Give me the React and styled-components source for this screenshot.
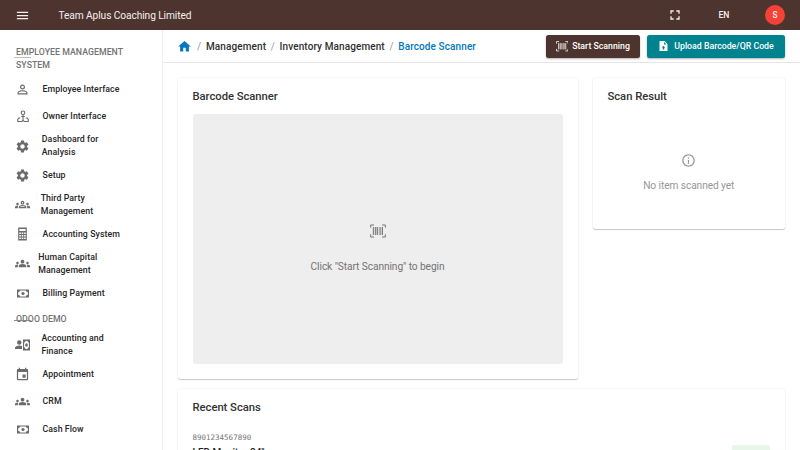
import React from 'react';
import styled, { createGlobalStyle } from 'styled-components';
import {
  MdMenu, MdFullscreen, MdHome, MdSettings, MdGroups, MdOutlineGroups,
  MdInfoOutline, MdEvent, MdPersonOutline,
} from 'react-icons/md';

const GlobalStyle = createGlobalStyle`
  * { box-sizing: border-box; }
  body { margin: 0; overflow: hidden; background: #fff; font-family: Roboto, sans-serif; color: #333; }
  svg { display: block; flex: none; }
`;

const Page = styled.div`
  height: 450px;
  display: flex;
  flex-direction: column;
  overflow: hidden;
`;

const TopBar = styled.header`
  height: 30px;
  flex: none;
  display: flex;
  align-items: center;
  padding: 0 15px;
  background: #4e342e;
  color: #f5efee;
`;

const AppTitle = styled.div`
  margin-left: 28.5px;
  flex: 1;
  font-size: 10.2px;
  letter-spacing: -0.09px;
`;

const Language = styled.div`
  width: 20px;
  margin: 0 31px 0 31px;
  text-align: center;
  font-size: 8.6px;
  font-weight: 500;
`;

const Avatar = styled.div`
  width: 20px;
  height: 20px;
  border-radius: 50%;
  background: #f44336;
  display: grid;
  place-items: center;
  font-size: 8.2px;
  font-weight: 500;
`;

const Body = styled.div`
  flex: 1;
  min-height: 0;
  display: flex;
`;

const Sidebar = styled.nav`
  width: 162.5px;
  flex: none;
  padding-top: 10px;
  border-right: 1px solid #eeeeee;
`;

const SectionHeading = styled.div`
  position: relative;
  padding: ${(p) => p.$top}px 20px ${(p) => 9.7 - p.$top}px 16px;
  font-size: 8.75px;
  line-height: 13px;
  font-weight: 500;
  letter-spacing: 0.04px;
  color: #737373;
  &::before {
    content: '';
    position: absolute;
    left: 14px;
    top: ${(p) => p.$rule}px;
    width: 17px;
    height: 1px;
    background: ${(p) => p.$tone};
  }
`;

const NavItem = styled.div`
  height: ${(p) => (p.$tall ? 31.2 : 27.5)}px;
  display: flex;
  align-items: center;
  color: #6b6b6b;
`;

const NavIcon = styled.span`
  width: 15px;
  margin-left: 15px;
  display: grid;
  place-items: center;
`;

const NavLabel = styled.span`
  margin-left: ${(p) => p.$gap}px;
  font-size: 8.75px;
  line-height: 13px;
  font-weight: 500;
  letter-spacing: 0.08px;
  white-space: pre-line;
  color: #262626;
`;

const Main = styled.main`
  flex: 1;
  min-width: 0;
`;

const SubHeader = styled.div`
  height: 33px;
  display: flex;
  align-items: center;
  padding: 0 15px 0 14.5px;
  border-bottom: 1px solid #e6e6e6;
`;

const Crumbs = styled.div`
  flex: 1;
  display: flex;
  align-items: center;
  font-size: 10px;
  font-weight: 500;
  letter-spacing: 0.1px;
  color: #303030;
`;

const Slash = styled.span`
  width: ${(p) => p.$width}px;
  text-align: center;
  font-weight: 400;
  color: #999;
`;

const Current = styled.span`
  color: #0277bd;
`;

const ActionButton = styled.button`
  height: 23px;
  width: ${(p) => p.$width}px;
  margin: 0 0 0 7px;
  padding: 0;
  border: 0;
  border-radius: 2.5px;
  display: flex;
  align-items: center;
  justify-content: center;
  gap: ${(p) => p.$gap}px;
  background: ${(p) => p.$color};
  color: #fff;
  font: 500 8.75px Roboto, sans-serif;
  box-shadow: 0 1px 2px rgba(0, 0, 0, 0.3);
`;

const Content = styled.div`
  padding: 15px 15px 0;
  display: grid;
  grid-template-columns: 400px 192.5px;
  column-gap: 15px;
  row-gap: 10px;
  align-items: start;
`;

const Card = styled.section`
  height: ${(p) => p.$height}px;
  padding: 10px 15px;
  border-radius: 2.5px;
  background: #fff;
  grid-column: ${(p) => (p.$wide ? '1 / -1' : 'auto')};
  box-shadow: 0 1px 1px rgba(0, 0, 0, 0.2), 0 0 2px rgba(0, 0, 0, 0.1);
`;

const CardTitle = styled.h2`
  margin: 0;
  font-size: 11.25px;
  line-height: 18px;
  font-weight: 500;
  letter-spacing: -0.03px;
  color: #333;
`;

const Viewfinder = styled.div`
  margin-top: 8px;
  height: 250px;
  border-radius: 2.5px;
  background: #eeeeee;
  display: flex;
  flex-direction: column;
  align-items: center;
  padding-top: 109px;
  color: #737373;
`;

const Hint = styled.div`
  margin-top: ${(p) => p.$gap}px;
  font-size: 10.2px;
  line-height: 15px;
  letter-spacing: -0.09px;
`;

const EmptyResult = styled.div`
  padding-top: 47px;
  display: flex;
  flex-direction: column;
  align-items: center;
  color: #969696;
`;

const ScanRow = styled.div`
  margin-top: 15px;
  display: flex;
  justify-content: space-between;
`;

const Code = styled.div`
  font: 7.5px/11px 'DejaVu Sans Mono', monospace;
  color: #777;
`;

const ItemName = styled.div`
  margin-top: 2px;
  font-size: 10px;
  line-height: 15px;
  font-weight: 500;
  color: #222;
`;

const Status = styled.div`
  width: 38px;
  height: 18px;
  margin: 13px 0 0;
  border-radius: 2.5px;
  background: #e8f5e9;
`;

const ScanIcon = ({ size = 15 }) => (
  <svg width={size} height={size} viewBox="0 0 24 24" fill="none" stroke="currentColor" strokeWidth="1.5">
    <path d="M1 7V3h5M18 3h5v4M23 17v4h-5M6 21H1v-4" />
    <path d="M5 6v12M8 6v12M11.5 6v12M15 6v12M18.7 6v12" />
    <path d="M9.5 6v12M16.5 6v12" strokeWidth=".7" />
  </svg>
);

const OwnerIcon = () => (
  <svg width="12" height="13" viewBox="0 0 24 26" fill="none" stroke="currentColor" strokeWidth="2.2">
    <circle cx="12" cy="5.5" r="3.6" />
    <path d="M12 9.5V22M8.5 13h7M6.500 16H3.500l-2 3v4h8l2.500-2.500 2.500 2.500h8v-4l-2-3h-3" />
  </svg>
);

const CalculatorIcon = () => (
  <svg width="13" height="14" viewBox="0 0 24 26">
    <path
      fill="currentColor"
      fillRule="evenodd"
      d="M4 1h16v24H4zM6.3 3.5v4h11.4v-4zM6 10v3h3v-3zM10.5 10v3h3v-3zM15 10v3h3v-3zM6 14.7v3h3v-3zM10.5 14.7v3h3v-3zM15 14.7v3h3v-3zM6 19.5v3h3v-3zM10.5 19.5v3h3v-3zM15 19.5v3h3v-3z"
    />
  </svg>
);

const CashIcon = () => (
  <svg width="12" height="9" viewBox="0 0 24 18">
    <path fill="currentColor" fillRule="evenodd" d="M0 1h24v16H0zM6 3c0 1.700-1 3-3.500 3v6c2.500 0 3.500 1.300 3.500 3h12c0-1.700 1-3 3.500-3V6C19 6 18 4.700 18 3z" />
    <circle cx="12" cy="9" r="3.2" fill="currentColor" />
  </svg>
);

const FinanceIcon = () => (
  <svg width="15" height="12" viewBox="0 0 30 24" fill="currentColor">
    <circle cx="8.5" cy="7" r="4.5" />
    <path d="M0 20v-2c0-3 4-5 8.5-5 2 0 4 .4 5.5 1.2V20z" />
    <path fillRule="evenodd" d="M16 1h14v22H16zM18.2 7v10c1.6 0 2.6 1 2.6 2.8h4.4c0-1.8 1-2.8 2.6-2.8V7c-1.6 0-2.6-1-2.6-2.8h-4.4C20.8 6 19.8 7 18.2 7z" />
    <ellipse cx="23" cy="12" rx="2.7" ry="3.5" />
  </svg>
);

const UploadFileIcon = () => (
  <svg width="11" height="12" viewBox="0 0 22 24">
    <path fill="currentColor" fillRule="evenodd" d="M5 2h8l6 6v14H3V4c0-1.2.8-2 2-2zm7 2v5h5zM11 11.500l-3.500 3.500h2v4h3v-4h2z" />
  </svg>
);

const management = [
  ['Employee Interface', <MdPersonOutline size={15} />, 12.5],
  ['Owner Interface', <OwnerIcon />, 12.5],
  ['Dashboard for\nAnalysis', <MdSettings size={15} />, 11.8],
  ['Setup', <MdSettings size={15} />, 12.5],
  ['Third Party\nManagement', <MdOutlineGroups size={15} />, 10.7],
  ['Accounting System', <CalculatorIcon />, 12.5],
  ['Human Capital\nManagement', <MdGroups size={15} />, 8.3],
  ['Billing Payment', <CashIcon />, 12.5],
];

const demo = [
  ['Accounting and\nFinance', <FinanceIcon />, 11.4],
  ['Appointment', <MdEvent size={15} />, 12.5],
  ['CRM', <MdGroups size={15} />, 12.5],
  ['Cash Flow', <CashIcon />, 12.5],
];

const NavList = ({ items }) =>
  items.map(([label, icon, gap]) => (
    <NavItem key={label} $tall={label.includes('\n')}>
      <NavIcon>{icon}</NavIcon>
      <NavLabel $gap={gap}>{label}</NavLabel>
    </NavItem>
  ));

export default function App() {
  return (
    <Page>
      <GlobalStyle />
      <TopBar>
        <MdMenu size={15} />
        <AppTitle>Team Aplus Coaching Limited</AppTitle>
        <MdFullscreen size={16} />
        <Language>EN</Language>
        <Avatar>S</Avatar>
      </TopBar>
      <Body>
        <Sidebar>
          <SectionHeading $top={5.5} $rule={17} $tone="#bdbdbd">EMPLOYEE MANAGEMENT SYSTEM</SectionHeading>
          <NavList items={management} />
          <SectionHeading $top={6.3} $rule={12.8} $tone="#8a8a8a">ODOO DEMO</SectionHeading>
          <NavList items={demo} />
        </Sidebar>
        <Main>
          <SubHeader>
            <Crumbs>
              <MdHome size={15} color="#0277bd" />
              <Slash $width={14}>/</Slash>
              <span>Management</span>
              <Slash $width={13.5}>/</Slash>
              <span>Inventory Management</span>
              <Slash $width={13.5}>/</Slash>
              <Current>Barcode Scanner</Current>
            </Crumbs>
            <ActionButton $width={94.5} $gap={4} $color="#4e342e">
              <ScanIcon size={12.5} />
              Start Scanning
            </ActionButton>
            <ActionButton $width={138} $gap={5} $color="#00838f">
              <UploadFileIcon />
              Upload Barcode/QR Code
            </ActionButton>
          </SubHeader>
          <Content>
            <Card $height={301}>
              <CardTitle>Barcode Scanner</CardTitle>
              <Viewfinder>
                <ScanIcon size={16} />
                <Hint $gap={19.5}>Click "Start Scanning" to begin</Hint>
              </Viewfinder>
            </Card>
            <Card $height={151}>
              <CardTitle>Scan Result</CardTitle>
              <EmptyResult>
                <MdInfoOutline size={15} />
                <Hint $gap={10}>No item scanned yet</Hint>
              </EmptyResult>
            </Card>
            <Card $height={200} $wide>
              <CardTitle>Recent Scans</CardTitle>
              <ScanRow>
                <div>
                  <Code>8901234567890</Code>
                  <ItemName>LED Monitor 24"</ItemName>
                </div>
                <Status />
              </ScanRow>
            </Card>
          </Content>
        </Main>
      </Body>
    </Page>
  );
}
